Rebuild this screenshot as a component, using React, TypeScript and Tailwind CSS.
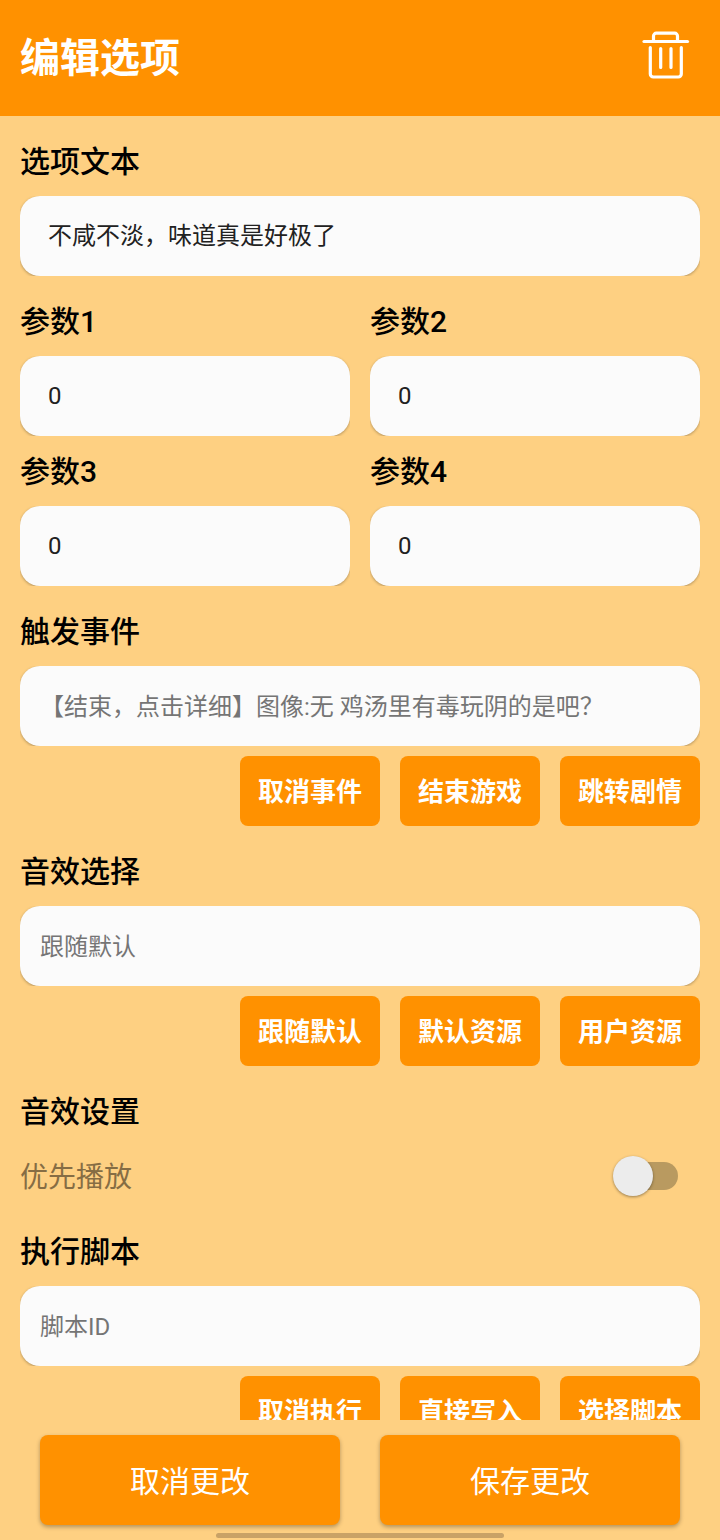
import React, { useState } from 'react';

interface FieldProps {
  id: string;
  label: string;
  value: string;
  onChange: (value: string) => void;
}

const labelClass = 'block h-[50px] text-[30px] leading-[52px] font-medium text-black';
// the clip keeps the shadow inside the field's box, so it only shows at the corners
const fieldClass =
  'block w-full h-20 rounded-[20px] bg-[#fbfbfb] text-2xl leading-20 text-[#212121] placeholder:text-[#757575] placeholder:opacity-100 shadow-[0_1px_3px_rgba(0,0,0,0.3)] [clip-path:inset(0)] outline-none';

function Field({ id, label, value, onChange }: FieldProps) {
  return (
    <div className="flex flex-col gap-2.5">
      <label htmlFor={id} className={labelClass}>{label}</label>
      <input
        id={id}
        type="text"
        value={value}
        onChange={(e) => onChange(e.target.value)}
        className={`${fieldClass} px-7`}
      />
    </div>
  );
}

interface PickerProps {
  id: string;
  label: string;
  placeholder: string;
  actions: string[];
}

function Picker({ id, label, placeholder, actions }: PickerProps) {
  return (
    <section className="flex flex-col gap-2.5">
      <label htmlFor={id} className={labelClass}>{label}</label>
      <input id={id} type="text" readOnly placeholder={placeholder} className={`${fieldClass} px-5 pt-0.5`} />
      <div className="flex justify-end gap-5">
        {actions.map((action) => (
          <button
            key={action}
            type="button"
            className="w-[140px] h-[70px] rounded-lg bg-[#ff9100] pt-0.5 text-[26px] font-bold text-white whitespace-nowrap"
          >
            {action}
          </button>
        ))}
      </div>
    </section>
  );
}

function TrashIcon() {
  return (
    <svg
      viewBox="0 0 48 48"
      className="size-12"
      fill="none"
      stroke="currentColor"
      strokeWidth="3.2"
      strokeLinecap="round"
      strokeLinejoin="round"
    >
      <path d="M2 10.5h43.5" />
      <path d="M11.5 10V5a2.8 2.8 0 0 1 2.8-2.8h18.4A2.8 2.8 0 0 1 35.5 5v5" />
      <path d="M8.3 16.5V43a3 3 0 0 0 3 3h25a3 3 0 0 0 3-3V16.5" />
      <path d="M18.7 17.5v19M29 17.5v19" />
    </svg>
  );
}

function App() {
  const [text, setText] = useState('不咸不淡，味道真是好极了');
  const [params, setParams] = useState(['0', '0', '0', '0']);
  const [priority, setPriority] = useState(false);

  const updateParam = (index: number, value: string) => {
    setParams(params.map((p, i) => (i === index ? value : p)));
  };

  return (
    <div className="relative flex h-screen flex-col bg-[#fed082] font-[Roboto,'Noto_Sans_CJK_SC',sans-serif]">
      {/* Header */}
      <header className="flex h-[116px] shrink-0 items-center justify-between bg-[#ff9100] px-5 text-white">
        <h1 className="pt-0.5 text-[40px] font-bold">编辑选项</h1>
        <button type="button" aria-label="删除" className="flex w-[68px] justify-center pb-1.5">
          <TrashIcon />
        </button>
      </header>

      {/* Form */}
      <main className="flex min-h-0 flex-1 flex-col gap-5 overflow-y-auto p-5 [scrollbar-width:none] *:shrink-0">
        <Field id="text" label="选项文本" value={text} onChange={setText} />

        <div className="grid grid-cols-2 gap-x-5 gap-y-2.5">
          {params.map((param, i) => (
            <Field
              key={i}
              id={`param-${i + 1}`}
              label={`参数${i + 1}`}
              value={param}
              onChange={(value) => updateParam(i, value)}
            />
          ))}
        </div>

        <Picker
          id="event"
          label="触发事件"
          placeholder="【结束，点击详细】图像:无 鸡汤里有毒玩阴的是吧？"
          actions={['取消事件', '结束游戏', '跳转剧情']}
        />
        <Picker
          id="sound"
          label="音效选择"
          placeholder="跟随默认"
          actions={['跟随默认', '默认资源', '用户资源']}
        />

        <section className="flex flex-col gap-2.5">
          <h2 className={labelClass}>音效设置</h2>
          <div className="flex h-[60px] items-center justify-between pr-[22px]">
            <label htmlFor="priority" className="pt-1 text-[28px] text-[#866d44]">优先播放</label>
            <input
              id="priority"
              type="checkbox"
              role="switch"
              checked={priority}
              onChange={(e) => setPriority(e.target.checked)}
              className="relative h-7 w-15 appearance-none rounded-full bg-[#b99a60] before:absolute before:-top-1.5 before:-left-[5px] before:size-10 before:rounded-full before:bg-[#ececec] before:shadow-[0_1px_3px_rgba(0,0,0,0.4)] checked:bg-[#ffb04d] checked:before:left-6 checked:before:bg-[#ff9100]"
            />
          </div>
        </section>

        <Picker
          id="script"
          label="执行脚本"
          placeholder="脚本ID"
          actions={['取消执行', '直接写入', '选择脚本']}
        />
      </main>

      {/* Footer */}
      <footer className="grid shrink-0 grid-cols-2 gap-10 px-10 py-[15px] text-[30px] text-white">
        <button type="button" className="h-[90px] rounded-lg bg-[#ff9100] pt-0.5 shadow-[0_2px_4px_rgba(0,0,0,0.3)]">
          取消更改
        </button>
        <button type="button" className="h-[90px] rounded-lg bg-[#ff9100] pt-0.5 shadow-[0_2px_4px_rgba(0,0,0,0.3)]">
          保存更改
        </button>
      </footer>

      <div className="absolute bottom-0.5 left-1/2 h-[5px] w-2/5 -translate-x-1/2 rounded-full bg-[#c9a266]" />
    </div>
  );
}

export default App;
